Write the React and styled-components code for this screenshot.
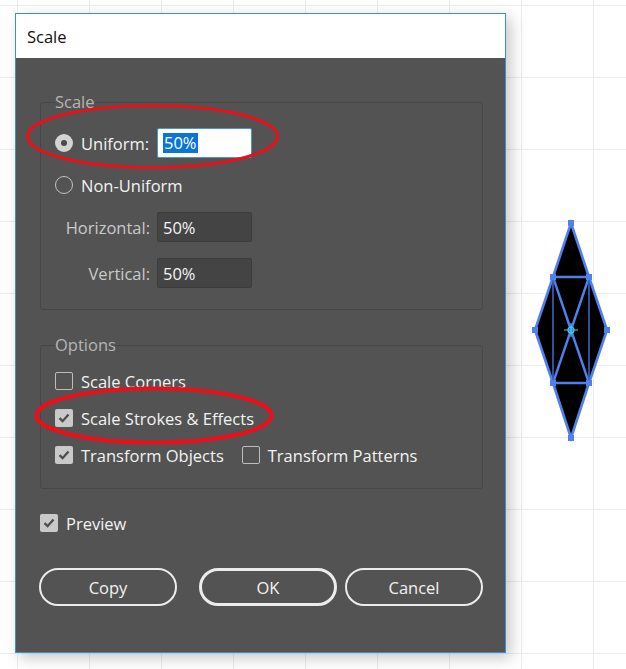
import React from "react";
import styled, { createGlobalStyle } from "styled-components";

const GlobalStyle = createGlobalStyle`
  html, body {
    margin: 0;
    padding: 0;
    background: #fff;
  }
  body {
    font-family: "Open Sans", "Noto Sans", sans-serif;
  }
`;

const Canvas = styled.div`
  position: relative;
  width: 626px;
  height: 669px;
  overflow: hidden;
  box-sizing: border-box;
  padding: 13px 0 0 15px;
  background-color: #fff;
  background-image: linear-gradient(to right, #ececec 1px, transparent 1px),
    linear-gradient(to bottom, #ececec 1px, transparent 1px);
  background-size: 72px 72px;
  background-position: 17px 5px;
`;

const Dialog = styled.div`
  width: 491px;
  height: 640px;
  box-sizing: border-box;
  border: 1px solid #3b8de0;
  display: flex;
  flex-direction: column;
  background: #535353;
  box-shadow: 5px 5px 14px rgba(0, 0, 0, 0.22);
`;

const TitleBar = styled.div`
  height: 44px;
  flex: none;
  display: flex;
  align-items: center;
  padding-left: 11px;
  background: #fff;
  color: #111;
  font-size: 16.5px;
`;

const Body = styled.div`
  flex: 1;
  display: flex;
  flex-direction: column;
  padding: 33px 22px 0 24px;
  font-size: 16.5px;
`;

const Group = styled.fieldset`
  margin: ${(p) => p.$top || 0}px 0 0 0;
  min-width: 0;
  border: 1px solid #474747;
  border-radius: 3px;
  padding: ${(p) => p.$pad};
`;

const Legend = styled.legend`
  padding: 0;
  font-size: 16.5px;
  line-height: 22px;
  color: #b5b5b5;
`;

const Stack = styled.div`
  display: flex;
  flex-direction: column;
  gap: ${(p) => p.$gap}px;
`;

const Row = styled.div`
  display: flex;
  align-items: center;
  gap: ${(p) => p.$gap || 8}px;
  height: ${(p) => p.$h || 24}px;
  margin-top: ${(p) => p.$top || 0}px;
`;

const Radio = styled.span`
  width: 18px;
  height: 18px;
  box-sizing: border-box;
  border-radius: 50%;
  flex: none;
  display: flex;
  align-items: center;
  justify-content: center;
  background: ${(p) => (p.$on ? "#d3d3d3" : "transparent")};
  border: ${(p) => (p.$on ? "none" : "1.5px solid #c2c2c2")};
  &::after {
    content: "";
    display: ${(p) => (p.$on ? "block" : "none")};
    width: 6px;
    height: 6px;
    border-radius: 50%;
    background: #4a4a4a;
  }
`;

const Box = styled.span`
  width: 18px;
  height: 18px;
  box-sizing: border-box;
  border-radius: 2px;
  flex: none;
  display: flex;
  align-items: center;
  justify-content: center;
  background: ${(p) => (p.$on ? "#c9c9c9" : "transparent")};
  border: ${(p) => (p.$on ? "none" : "1.5px solid #bdbdbd")};
`;

const Label = styled.span`
  color: #f2f2f2;
  white-space: nowrap;
  width: ${(p) => (p.$w ? `${p.$w}px` : "auto")};
  margin-right: ${(p) => p.$after || 0}px;
`;

const FieldLabel = styled.span`
  width: 95px;
  text-align: right;
  color: #cacaca;
`;

const Input = styled.div`
  width: 95px;
  height: 30px;
  box-sizing: border-box;
  display: flex;
  align-items: center;
  padding-left: 5px;
  border-radius: 2px;
  background: ${(p) => (p.$focus ? "#fff" : "#444")};
  border: 1px solid ${(p) => (p.$focus ? "#4b93dc" : "#3c3c3c")};
  color: #f4f4f4;
`;

const Selection = styled.span`
  background: #0a74d8;
  color: #fff;
  padding: 0 1px;
  line-height: 20px;
`;

const ButtonRow = styled.div`
  display: flex;
  gap: 8px;
  margin: 33px 0 0 -1px;
`;

const Button = styled.button`
  width: ${(p) => p.$w || 138}px;
  height: 38px;
  box-sizing: border-box;
  margin-right: ${(p) => p.$after || 0}px;
  border-radius: 19px;
  background: transparent;
  border: ${(p) => (p.$primary ? 3 : 2)}px solid #ececec;
  color: #f2f2f2;
  font-family: inherit;
  font-size: 16.5px;
  padding: 0;
`;

const Annotations = styled.svg`
  position: absolute;
  left: 0;
  top: 0;
  pointer-events: none;
`;

const Shape = styled.svg`
  position: absolute;
  left: 530px;
  top: 215px;
`;

function Check({ on, children, after }) {
  return (
    <>
      <Box $on={on}>
        {on && (
          <svg width="14" height="14" viewBox="0 0 14 14">
            <path
              d="M2.5 7.2 L5.6 10.2 L11.5 3.6"
              fill="none"
              stroke="#4d4d4d"
              strokeWidth="2.3"
            />
          </svg>
        )}
      </Box>
      <Label $after={after}>{children}</Label>
    </>
  );
}

function ScaleShape() {
  const blue = "#4f80ee";
  const pts = {
    t: [41, 8],
    ul: [23, 62],
    ur: [59, 62],
    l: [5, 115],
    r: [77, 115],
    ll: [23, 168],
    lr: [59, 168],
    b: [41, 223],
  };
  const outline = ["t", "ur", "r", "lr", "b", "ll", "l", "ul"]
    .map((k) => pts[k].join(","))
    .join(" ");
  const line = (a, b, w = 2.4, c = blue) => (
    <line
      x1={pts[a][0]}
      y1={pts[a][1]}
      x2={pts[b][0]}
      y2={pts[b][1]}
      stroke={c}
      strokeWidth={w}
    />
  );
  return (
    <Shape width="85" height="232" viewBox="0 0 85 232">
      <polygon points={outline} fill="#000" stroke={blue} strokeWidth="2.6" />
      {line("ul", "ur")}
      {line("ll", "lr")}
      {line("ul", "lr")}
      {line("ur", "ll")}
      {line("ul", "ll", 1.6, "#3f63c4")}
      {line("ur", "lr", 1.6, "#3f63c4")}
      {Object.values(pts).map(([x, y], i) => (
        <rect key={i} x={x - 3} y={y - 3} width="6" height="6" fill={blue} />
      ))}
      <circle cx="41" cy="115" r="3" fill="none" stroke="#3fd2f2" strokeWidth="1.2" />
      <line x1="34" y1="115" x2="48" y2="115" stroke="#3fd2f2" strokeWidth="1" />
      <line x1="41" y1="108" x2="41" y2="122" stroke="#3fd2f2" strokeWidth="1" />
    </Shape>
  );
}

export default function App() {
  return (
    <Canvas>
      <GlobalStyle />
      <Dialog>
        <TitleBar>Scale</TitleBar>
        <Body>
          <Group $pad="15px 14px 21px 14px">
            <Legend>Scale</Legend>
            <Stack $gap={12}>
              <Row $h={30}>
                <Radio $on />
                <Label $w={68}>Uniform:</Label>
                <Input $focus>
                  <Selection>50%</Selection>
                </Input>
              </Row>
              <Row $h={30}>
                <Radio />
                <Label>Non-Uniform</Label>
              </Row>
              <Stack $gap={16}>
                <Row $h={30} $gap={7}>
                  <FieldLabel>Horizontal:</FieldLabel>
                  <Input>50%</Input>
                </Row>
                <Row $h={30} $gap={7}>
                  <FieldLabel>Vertical:</FieldLabel>
                  <Input>50%</Input>
                </Row>
              </Stack>
            </Stack>
          </Group>

          <Group $top={24} $pad="13px 14px 21px 14px">
            <Legend>Options</Legend>
            <Stack $gap={13}>
              <Row>
                <Check on={false}>Scale Corners</Check>
              </Row>
              <Row>
                <Check on>Scale Strokes &amp; Effects</Check>
              </Row>
              <Row>
                <Check on after={10}>
                  Transform Objects
                </Check>
                <Check on={false}>Transform Patterns</Check>
              </Row>
            </Stack>
          </Group>

          <Row $top={22}>
            <Check on>Preview</Check>
          </Row>

          <ButtonRow>
            <Button $w={138} $after={14}>Copy</Button>
            <Button $w={138} $primary>OK</Button>
            <Button $w={138}>Cancel</Button>
          </ButtonRow>
        </Body>
      </Dialog>

      <ScaleShape />

      <Annotations width="626" height="669" viewBox="0 0 626 669">
        <ellipse cx="152.5" cy="136.5" rx="125" ry="31" fill="none" stroke="#e8101a" strokeWidth="3" />
        <ellipse cx="154" cy="415.5" rx="117.5" ry="27" fill="none" stroke="#e8101a" strokeWidth="4.2" />
      </Annotations>
    </Canvas>
  );
}
